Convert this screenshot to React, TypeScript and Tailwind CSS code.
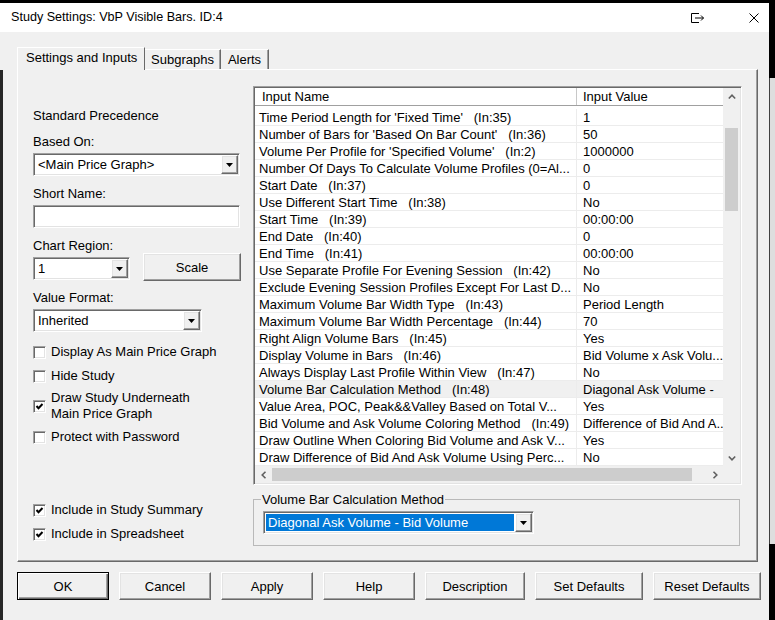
import type { ReactNode } from 'react';

const rows: [string, string][] = [
  ["Time Period Length for 'Fixed Time'   (In:35)", '1'],
  ["Number of Bars for 'Based On Bar Count'   (In:36)", '50'],
  ["Volume Per Profile for 'Specified Volume'   (In:2)", '1000000'],
  ['Number Of Days To Calculate Volume Profiles (0=Al...', '0'],
  ['Start Date   (In:37)', '0'],
  ['Use Different Start Time   (In:38)', 'No'],
  ['Start Time   (In:39)', '00:00:00'],
  ['End Date   (In:40)', '0'],
  ['End Time   (In:41)', '00:00:00'],
  ['Use Separate Profile For Evening Session   (In:42)', 'No'],
  ['Exclude Evening Session Profiles Except For Last D...', 'No'],
  ['Maximum Volume Bar Width Type   (In:43)', 'Period Length'],
  ['Maximum Volume Bar Width Percentage   (In:44)', '70'],
  ['Right Align Volume Bars   (In:45)', 'Yes'],
  ['Display Volume in Bars   (In:46)', 'Bid Volume x Ask Volu...'],
  ['Always Display Last Profile Within View   (In:47)', 'No'],
  ['Volume Bar Calculation Method   (In:48)', 'Diagonal Ask Volume -'],
  ['Value Area, POC, Peak&&Valley Based on Total V...', 'Yes'],
  ['Bid Volume and Ask Volume Coloring Method   (In:49)', 'Difference of Bid And A...'],
  ['Draw Outline When Coloring Bid Volume and Ask V...', 'Yes'],
  ['Draw Difference of Bid And Ask Volume Using Perc...', 'No'],
];

const raised =
  'bg-[#f0f0f0] border border-t-white border-l-white border-r-[#696969] border-b-[#696969] shadow-[inset_-1px_-1px_0_#a0a0a0,inset_1px_1px_0_#e3e3e3]';
const sunken =
  'bg-white border border-t-[#a0a0a0] border-l-[#a0a0a0] border-r-white border-b-white shadow-[inset_1px_1px_0_#696969,inset_-1px_-1px_0_#e3e3e3]';

function Triangle() {
  return (
    <svg width="7" height="4" viewBox="0 0 7 4">
      <polygon points="0,0 7,0 3.5,4" fill="#000" />
    </svg>
  );
}

function Chevron({ dir }: { dir: 'up' | 'down' | 'left' | 'right' }) {
  const pts = {
    up: '0.8,4.5 4,1.2 7.2,4.5',
    down: '0.8,1.5 4,4.8 7.2,1.5',
    left: '4.5,0.8 1.2,4 4.5,7.2',
    right: '1.5,0.8 4.8,4 1.5,7.2',
  }[dir];
  const horiz = dir === 'up' || dir === 'down';
  return (
    <svg width={horiz ? 8 : 6} height={horiz ? 6 : 8} viewBox={horiz ? '0 0 8 6' : '0 0 6 8'}>
      <polyline points={pts} fill="none" stroke="#606060" strokeWidth="1.6" />
    </svg>
  );
}

function Combo({ value, className, selected }: { value: string; className: string; selected?: boolean }) {
  return (
    <div className={`flex h-[23px] p-[1px] ${sunken} ${className}`}>
      <div className="flex min-w-0 flex-1 items-center p-[1px]">
        <div
          className={`flex h-full flex-1 items-center overflow-hidden whitespace-pre pl-[2px] ${
            selected ? 'bg-[#0078d7] text-white' : ''
          }`}
        >
          {value}
        </div>
      </div>
      <div className={`flex w-[17px] items-center justify-center ${raised}`}>
        <Triangle />
      </div>
    </div>
  );
}

function Check({ checked, children }: { checked?: boolean; children: ReactNode }) {
  return (
    <div className="flex items-center leading-[16px]">
      <div className={`flex h-[13px] w-[13px] shrink-0 items-center justify-center ${sunken}`}>
        {checked && (
          <svg width="9" height="9" viewBox="0 0 9 9">
            <polyline points="1.5,4 3.5,6.2 7.5,2" fill="none" stroke="#000" strokeWidth="2" />
          </svg>
        )}
      </div>
      <div className="ml-[5px]">{children}</div>
    </div>
  );
}

function Button({ label, w, isDefault }: { label: string; w: string; isDefault?: boolean }) {
  return (
    <div
      className={`flex h-[28px] items-center justify-center ${w} ${
        isDefault
          ? 'border border-black bg-[#f0f0f0] shadow-[inset_1px_1px_0_#fff,inset_-1px_-1px_0_#696969,inset_-2px_-2px_0_#a0a0a0]'
          : raised
      }`}
    >
      {label}
    </div>
  );
}

export default function App() {
  return (
    <div className="flex h-[620px] w-[775px] overflow-hidden bg-black font-['Liberation_Sans',Arial,sans-serif] text-[13px] leading-[15px] text-black">
      <div className="mt-[3px] flex h-[617px] w-[769px] flex-col bg-[#f0f0f0]">
        {/* title bar */}
        <div className="flex h-[29px] shrink-0 items-center bg-white pl-[11px] pr-[10px] text-[12.6px]">
          <span>Study Settings: VbP Visible Bars. ID:4</span>
          <svg className="ml-auto" width="15" height="12" viewBox="0 0 15 12">
            <path d="M9 1.5H1.5V10.5H9" fill="none" stroke="#000" strokeWidth="1" />
            <path d="M5 6H13.5M11 3.5L13.5 6L11 8.5" fill="none" stroke="#000" strokeWidth="1" />
          </svg>
          <svg className="ml-[44px]" width="10" height="10" viewBox="0 0 10 10">
            <path d="M0.5 0.5L9.5 9.5M9.5 0.5L0.5 9.5" stroke="#000" strokeWidth="1" />
          </svg>
        </div>

        <div className="flex flex-1">
          <div className="flex w-[3px] flex-col">
            <div className="h-[38px] bg-[#f0f0f0]" />
            <div className="flex-1 bg-[#262626]" />
          </div>

          <div className="flex flex-1 flex-col">
            {/* tabs */}
            <div className="ml-[14px] mt-[15px] flex h-[22px] items-end">
              <div className="relative z-10 -mb-px h-[23px] w-[128px] border-l border-r border-t border-l-white border-r-[#696969] border-t-white bg-[#f0f0f0] pl-[8px] pt-[2px]">
                Settings and Inputs
              </div>
              <div className="flex h-[20px] w-[76px] items-center justify-center border-r border-t border-r-[#696969] border-t-white shadow-[inset_-1px_0_0_#a0a0a0]">
                Subgraphs
              </div>
              <div className="flex h-[20px] w-[48px] items-center justify-center border-r border-t border-r-[#696969] border-t-white shadow-[inset_-1px_0_0_#a0a0a0]">
                Alerts
              </div>
            </div>

            {/* panel */}
            <div className="ml-[14px] flex h-[493px] w-[741px] border border-b-[#696969] border-l-white border-r-[#696969] border-t-white shadow-[inset_-1px_-1px_0_#a0a0a0]">
              {/* left column */}
              <div className="ml-[15px] flex w-[208px] flex-col">
                <div className="mt-[38px]">Standard Precedence</div>
                <div className="mt-[11px]">Based On:</div>
                <Combo value="<Main Price Graph>" className="mt-[4px] w-[207px]" />
                <div className="mt-[10px]">Short Name:</div>
                <div className={`mt-[4px] h-[23px] w-[207px] ${sunken}`} />
                <div className="mt-[10px]">Chart Region:</div>
                <div className="flex h-[28px]">
                  <Combo value="1" className="mt-[4px] w-[97px]" />
                  <div className="ml-[13px]">
                    <Button label="Scale" w="w-[98px]" />
                  </div>
                </div>
                <div className="mt-[9px]">Value Format:</div>
                <Combo value="Inherited" className="mt-[4px] w-[169px]" />
                <div className="mt-[12px]">
                  <Check>Display As Main Price Graph</Check>
                </div>
                <div className="mt-[8px]">
                  <Check>Hide Study</Check>
                </div>
                <div className="mt-[6px]">
                  <Check checked>
                    Draw Study Underneath
                    <br />
                    Main Price Graph
                  </Check>
                </div>
                <div className="mt-[7px]">
                  <Check>Protect with Password</Check>
                </div>
                <div className="mt-[57px]">
                  <Check checked>Include in Study Summary</Check>
                </div>
                <div className="mt-[8px]">
                  <Check checked>Include in Spreadsheet</Check>
                </div>
              </div>

              {/* right column */}
              <div className="ml-[12px] flex flex-col">
                <div className="mt-[16px] flex h-[399px] w-[489px] flex-col border border-b-white border-l-[#a0a0a0] border-r-white border-t-[#a0a0a0] bg-white p-px shadow-[inset_1px_1px_0_#696969,inset_-1px_-1px_0_#e3e3e3]">
                  <div className="flex flex-1">
                    <div className="flex w-[468px] flex-col bg-white">
                      <div className="flex h-[18px] shrink-0 border-b border-[#a0a0a0]">
                        <div className="w-[322px] border-r border-[#c8c8c8] pl-[7px] pt-px">Input Name</div>
                        <div className="flex-1 pl-[6px] pt-px">Input Value</div>
                      </div>
                      <div className="h-[3px]" />
                      {rows.map(([name, value]) => (
                        <div
                          key={name}
                          className={`flex h-[17px] shrink-0 border-b border-[#ececec] ${
                            name.startsWith('Volume Bar Calculation') ? 'bg-[#f0f0f0]' : ''
                          }`}
                        >
                          <div className="w-[322px] overflow-hidden whitespace-pre border-r border-[#ececec] pl-[4px] pt-px">
                            {name}
                          </div>
                          <div className="w-[146px] overflow-hidden whitespace-pre pl-[6px] pt-px">{value}</div>
                        </div>
                      ))}
                    </div>
                    <div className="flex w-[17px] flex-col bg-[#f0f0f0]">
                      <div className="flex h-[17px] items-center justify-center">
                        <Chevron dir="up" />
                      </div>
                      <div className="mx-[2px] mt-[23px] h-[83px] bg-[#cdcdcd]" />
                      <div className="mt-auto flex h-[17px] items-center justify-center">
                        <Chevron dir="down" />
                      </div>
                    </div>
                  </div>
                  <div className="flex h-[17px] shrink-0 bg-[#f0f0f0]">
                    <div className="flex w-[17px] items-center justify-center">
                      <Chevron dir="left" />
                    </div>
                    <div className="my-[2px] w-[420px] bg-[#cdcdcd]" />
                    <div className="ml-auto mr-[17px] flex w-[17px] items-center justify-center">
                      <Chevron dir="right" />
                    </div>
                  </div>
                </div>

                <fieldset className="mt-[7px] h-[54px] w-[487px] border border-[#b9b9b9]">
                  <legend className="ml-[7px] px-px leading-[15px]">Volume Bar Calculation Method</legend>
                  <Combo value="Diagonal Ask Volume - Bid Volume" selected className="ml-[9px] mt-[4px] w-[271px]" />
                </fieldset>
              </div>
            </div>

            {/* bottom buttons */}
            <div className="ml-[14px] mt-[10px] flex gap-[10px]">
              <Button label="OK" w="w-[92px]" isDefault />
              <Button label="Cancel" w="w-[92px]" />
              <Button label="Apply" w="w-[92px]" />
              <Button label="Help" w="w-[92px]" />
              <Button label="Description" w="w-[100px]" />
              <Button label="Set Defaults" w="w-[108px]" />
              <Button label="Reset Defaults" w="w-[108px]" />
            </div>
          </div>
        </div>
      </div>
      <div className="flex w-[6px] flex-col">
        <div className="mt-[78px] h-[466px] border-l border-[#404040] bg-[#dedede]" />
      </div>
    </div>
  );
}
